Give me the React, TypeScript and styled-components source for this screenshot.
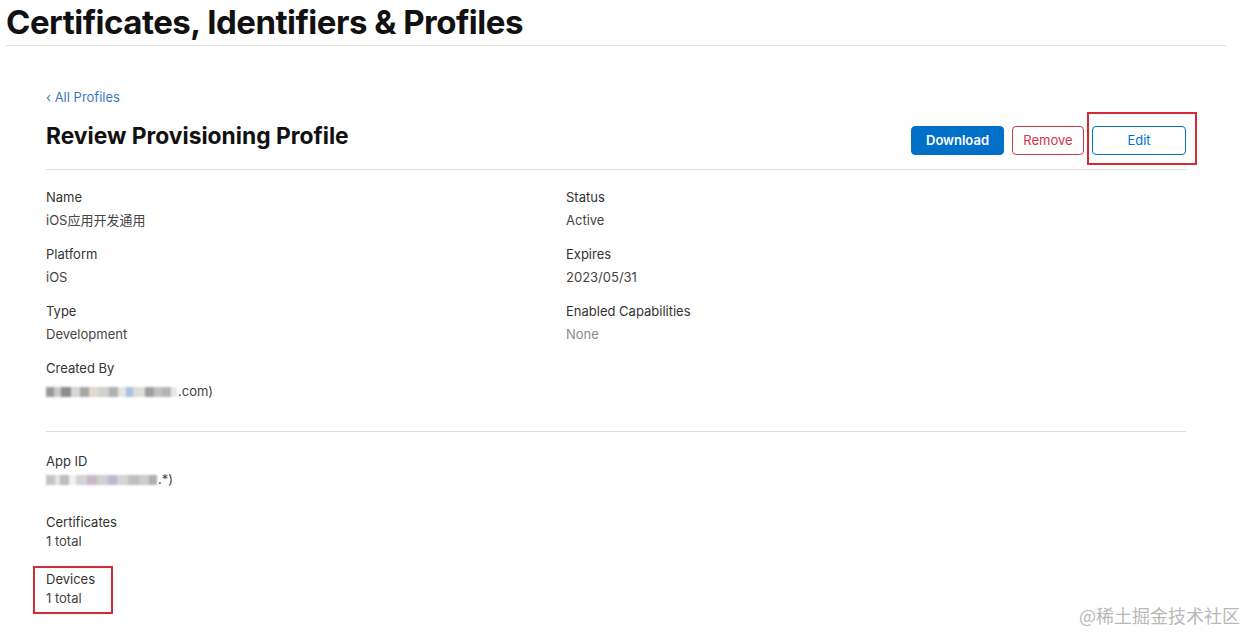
import styled, { createGlobalStyle } from 'styled-components';

const GlobalStyle = createGlobalStyle`
  body {
    margin: 0;
    background: #fff;
    font-family: Inter, "Noto Sans", "Noto Sans CJK SC", sans-serif;
    color: #333;
  }
`;

const Page = styled.div`
  position: relative;
  width: 1246px;
  height: 633px;
  overflow: hidden;
  background: #fff;
`;

const TopBar = styled.div`
  margin: 0 20px 0 6px;
  border-bottom: 1px solid #e3e3e3;
`;

const SiteTitle = styled.h1`
  margin: 0;
  font-size: 33px;
  line-height: 45px;
  font-weight: 700;
  color: #111;
  letter-spacing: -0.5px;
`;

const Content = styled.div`
  padding: 42px 60px 0 46px;
`;

const BackLink = styled.a`
  display: block;
  font-size: 13px;
  line-height: 18px;
  color: #3b7ac4;
  text-decoration: none;
`;

const HeaderRow = styled.div`
  display: flex;
  justify-content: space-between;
  align-items: flex-start;
  margin-top: 15px;
  padding-bottom: 14px;
  border-bottom: 1px solid #dcdcdc;
`;

const PageTitle = styled.h2`
  margin: 0;
  font-size: 22.8px;
  line-height: 30px;
  font-weight: 700;
  color: #111;
`;

const Actions = styled.div`
  display: flex;
  gap: 8px;
  margin-top: 5px;
`;

const Button = styled.button<{ $kind: 'primary' | 'danger' | 'outline'; $w: number }>`
  box-sizing: border-box;
  height: 29px;
  width: ${(p) => p.$w}px;
  padding: 0 0 2px;
  border-radius: 4px;
  font-family: inherit;
  font-size: 13px;
  font-weight: ${(p) => (p.$kind === 'primary' ? 600 : 400)};
  cursor: pointer;
  background: ${(p) => (p.$kind === 'primary' ? '#0070c9' : '#fff')};
  color: ${(p) =>
    p.$kind === 'primary' ? '#fff' : p.$kind === 'danger' ? '#c9374b' : '#0070c9'};
  border: 1px solid
    ${(p) => (p.$kind === 'primary' ? '#0070c9' : p.$kind === 'danger' ? '#c9374b' : '#0070c9')};
`;

const Section = styled.div<{ $divider?: boolean; $top: number }>`
  padding-top: ${(p) => p.$top}px;
  padding-bottom: ${(p) => (p.$divider ? '30px' : '0')};
  border-bottom: ${(p) => (p.$divider ? '1px solid #dcdcdc' : 'none')};
`;

const TwoCol = styled.div`
  display: grid;
  grid-template-columns: 520px 1fr;
`;

const Column = styled.div<{ $gap: number }>`
  display: flex;
  flex-direction: column;
  gap: ${(p) => p.$gap}px;
`;

const Field = styled.div``;

const Label = styled.div<{ $lh: number }>`
  font-size: 13px;
  line-height: ${(p) => p.$lh}px;
  color: #333;
`;

const Value = styled.div<{ $lh: number; $muted?: boolean; $mt?: number }>`
  margin-top: ${(p) => p.$mt ?? 0}px;
  font-size: 13px;
  line-height: ${(p) => p.$lh}px;
  color: ${(p) => (p.$muted ? '#8a8a8a' : '#444')};
`;

const Blur = styled.span`
  display: inline-flex;
  align-items: center;
  vertical-align: middle;
  filter: blur(1.2px);
  margin-right: 1px;
`;

const Pixel = styled.span<{ $w: number; $c: string }>`
  display: inline-block;
  width: ${(p) => p.$w}px;
  height: 10px;
  background: ${(p) => p.$c};
`;

const Marker = styled.div<{ $x: number; $y: number; $w: number; $h: number }>`
  position: absolute;
  left: ${(p) => p.$x}px;
  top: ${(p) => p.$y}px;
  width: ${(p) => p.$w}px;
  height: ${(p) => p.$h}px;
  box-sizing: border-box;
  border: 2px solid #d22a35;
  pointer-events: none;
`;

const Watermark = styled.div`
  position: absolute;
  right: 6px;
  bottom: 5px;
  font-size: 18px;
  color: #b8b8b8;
  font-family: "Noto Sans CJK SC", sans-serif;
`;

const createdBlur = [
  ['#9a9a9a', 8], ['#c8c8c8', 7], ['#8c8c8c', 10], ['#d6d6d6', 9], ['#a6a6a6', 9],
  ['#e0d8cc', 10], ['#cfcfcf', 10], ['#b0b0b0', 9], ['#e6e6e6', 8], ['#a4c4e0', 7],
  ['#dcdcdc', 12], ['#a0a0a0', 9], ['#c0c0c0', 8], ['#b4b4b4', 9], ['#e8e8e8', 6],
] as const;

const appBlur = [
  ['#c4c4c4', 9], ['#e4e4e4', 5], ['#bcbcbc', 9], ['#f0f0f0', 7], ['#d4d4d4', 11],
  ['#c8b8c8', 10], ['#d0d0d0', 11], ['#b8bcd0', 9], ['#d4d4d4', 11], ['#c0c0c0', 11],
  ['#cccccc', 10], ['#b0b0b0', 8],
] as const;

function Blurred({ parts }: { parts: readonly (readonly [string, number])[] }) {
  return (
    <Blur>
      {parts.map(([c, w], i) => (
        <Pixel key={i} $c={c} $w={w} />
      ))}
    </Blur>
  );
}

export default function App() {
  return (
    <Page>
      <GlobalStyle />
      <TopBar>
        <SiteTitle>Certificates, Identifiers &amp; Profiles</SiteTitle>
      </TopBar>
      <Content>
        <BackLink href="#">‹ All Profiles</BackLink>
        <HeaderRow>
          <PageTitle>Review Provisioning Profile</PageTitle>
          <Actions>
            <Button $kind="primary" $w={93}>Download</Button>
            <Button $kind="danger" $w={72}>Remove</Button>
            <Button $kind="outline" $w={94}>Edit</Button>
          </Actions>
        </HeaderRow>

        <Section $divider $top={17}>
          <TwoCol>
            <Column $gap={14}>
              <Field>
                <Label $lh={20}>Name</Label>
                <Value $lh={20} $mt={3}>iOS应用开发通用</Value>
              </Field>
              <Field>
                <Label $lh={20}>Platform</Label>
                <Value $lh={20} $mt={3}>iOS</Value>
              </Field>
              <Field>
                <Label $lh={20}>Type</Label>
                <Value $lh={20} $mt={3}>Development</Value>
              </Field>
              <Field>
                <Label $lh={20}>Created By</Label>
                <Value $lh={20} $mt={3}>
                  <Blurred parts={createdBlur} />.com)
                </Value>
              </Field>
            </Column>
            <Column $gap={14}>
              <Field>
                <Label $lh={20}>Status</Label>
                <Value $lh={20} $mt={3}>Active</Value>
              </Field>
              <Field>
                <Label $lh={20}>Expires</Label>
                <Value $lh={20} $mt={3}>2023/05/31</Value>
              </Field>
              <Field>
                <Label $lh={20}>Enabled Capabilities</Label>
                <Value $lh={20} $mt={3} $muted>None</Value>
              </Field>
            </Column>
          </TwoCol>
        </Section>

        <Section $top={20}>
          <Column $gap={19}>
            <Field>
              <Label $lh={19}>App ID</Label>
              <Value $lh={30} $mt={-7}>
                <Blurred parts={appBlur} />.*)
              </Value>
            </Field>
            <Field>
              <Label $lh={19}>Certificates</Label>
              <Value $lh={19}>1 total</Value>
            </Field>
            <Field>
              <Label $lh={19}>Devices</Label>
              <Value $lh={19}>1 total</Value>
            </Field>
          </Column>
        </Section>
      </Content>

      <Marker $x={1087} $y={112} $w={110} $h={53} />
      <Marker $x={33} $y={566} $w={80} $h={48} />
      <Watermark>@稀土掘金技术社区</Watermark>
    </Page>
  );
}
